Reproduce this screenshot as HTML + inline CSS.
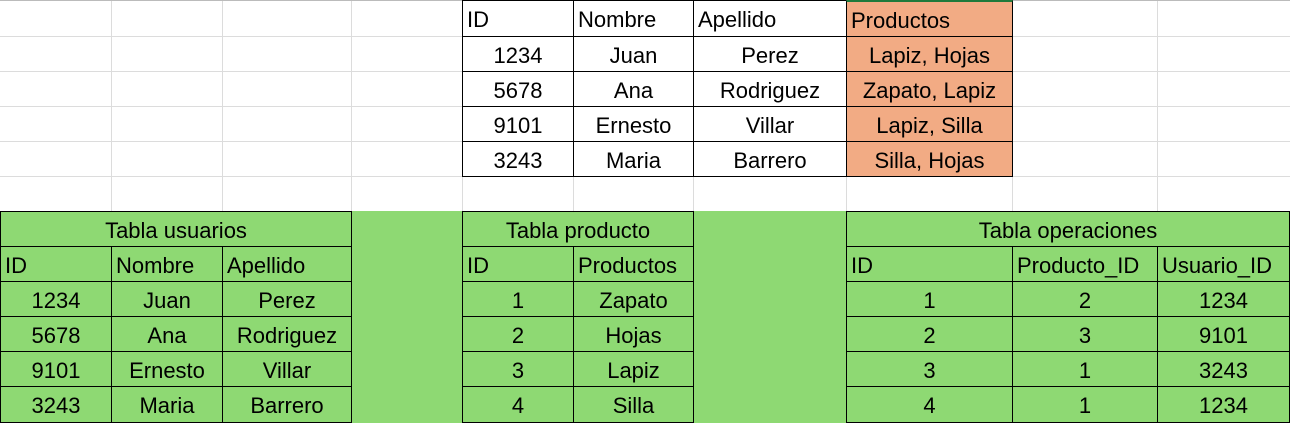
<!DOCTYPE html>
<html><head><meta charset="utf-8"><style>
body{margin:0;width:1290px;height:423px;overflow:hidden;background:#fff;position:relative;font-family:"Liberation Sans",Arial,sans-serif;font-size:22px;color:#000}
.g{position:absolute;background:#dcdcdc}
.c{position:absolute;box-sizing:border-box;border:1px solid #000;line-height:36px;padding-top:1px;text-align:center;white-space:nowrap;overflow:hidden}
.l{text-align:left;padding-left:4px}
.o{background:#F2AB84}
</style></head><body>
<div class="g" style="left:111px;top:0;width:1px;height:211px"></div>
<div class="g" style="left:222px;top:0;width:1px;height:211px"></div>
<div class="g" style="left:351px;top:0;width:1px;height:211px"></div>
<div class="g" style="left:462px;top:0;width:1px;height:211px"></div>
<div class="g" style="left:573px;top:0;width:1px;height:211px"></div>
<div class="g" style="left:693px;top:0;width:1px;height:211px"></div>
<div class="g" style="left:846px;top:0;width:1px;height:211px"></div>
<div class="g" style="left:1012px;top:0;width:1px;height:211px"></div>
<div class="g" style="left:1157px;top:0;width:1px;height:211px"></div>
<div class="g" style="left:0;top:36px;width:1290px;height:1px"></div>
<div class="g" style="left:0;top:71px;width:1290px;height:1px"></div>
<div class="g" style="left:0;top:106px;width:1290px;height:1px"></div>
<div class="g" style="left:0;top:141px;width:1290px;height:1px"></div>
<div class="g" style="left:0;top:176px;width:1290px;height:1px"></div>
<div class="g" style="left:0;top:0;width:1290px;height:1px;background:#bbb"></div>
<div style="position:absolute;left:0;top:211px;width:1290px;height:212px;background:#8ED973"></div>

<div class="c l" style="left:462px;top:0;width:112px;height:37px">ID</div>
<div class="c l" style="left:573px;top:0;width:121px;height:37px">Nombre</div>
<div class="c l" style="left:693px;top:0;width:154px;height:37px">Apellido</div>
<div class="c l o" style="left:846px;top:0;width:167px;height:37px;border-top:2px solid #1e7a3c">Productos</div>

<div class="c" style="left:462px;top:36px;width:112px;height:36px">1234</div>
<div class="c" style="left:573px;top:36px;width:121px;height:36px">Juan</div>
<div class="c" style="left:693px;top:36px;width:154px;height:36px">Perez</div>
<div class="c o" style="left:846px;top:36px;width:167px;height:36px">Lapiz, Hojas</div>

<div class="c" style="left:462px;top:71px;width:112px;height:36px">5678</div>
<div class="c" style="left:573px;top:71px;width:121px;height:36px">Ana</div>
<div class="c" style="left:693px;top:71px;width:154px;height:36px">Rodriguez</div>
<div class="c o" style="left:846px;top:71px;width:167px;height:36px">Zapato, Lapiz</div>

<div class="c" style="left:462px;top:106px;width:112px;height:36px">9101</div>
<div class="c" style="left:573px;top:106px;width:121px;height:36px">Ernesto</div>
<div class="c" style="left:693px;top:106px;width:154px;height:36px">Villar</div>
<div class="c o" style="left:846px;top:106px;width:167px;height:36px">Lapiz, Silla</div>

<div class="c" style="left:462px;top:141px;width:112px;height:36px">3243</div>
<div class="c" style="left:573px;top:141px;width:121px;height:36px">Maria</div>
<div class="c" style="left:693px;top:141px;width:154px;height:36px">Barrero</div>
<div class="c o" style="left:846px;top:141px;width:167px;height:36px">Silla, Hojas</div>

<div class="c" style="left:0;top:211px;width:352px;height:36px">Tabla usuarios</div>
<div class="c l" style="left:0;top:246px;width:112px;height:36px">ID</div>
<div class="c l" style="left:111px;top:246px;width:112px;height:36px">Nombre</div>
<div class="c l" style="left:222px;top:246px;width:130px;height:36px">Apellido</div>
<div class="c" style="left:0;top:281px;width:112px;height:36px">1234</div>
<div class="c" style="left:111px;top:281px;width:112px;height:36px">Juan</div>
<div class="c" style="left:222px;top:281px;width:130px;height:36px">Perez</div>
<div class="c" style="left:0;top:316px;width:112px;height:36px">5678</div>
<div class="c" style="left:111px;top:316px;width:112px;height:36px">Ana</div>
<div class="c" style="left:222px;top:316px;width:130px;height:36px">Rodriguez</div>
<div class="c" style="left:0;top:351px;width:112px;height:36px">9101</div>
<div class="c" style="left:111px;top:351px;width:112px;height:36px">Ernesto</div>
<div class="c" style="left:222px;top:351px;width:130px;height:36px">Villar</div>
<div class="c" style="left:0;top:386px;width:112px;height:37px">3243</div>
<div class="c" style="left:111px;top:386px;width:112px;height:37px">Maria</div>
<div class="c" style="left:222px;top:386px;width:130px;height:37px">Barrero</div>

<div class="c" style="left:462px;top:211px;width:232px;height:36px">Tabla producto</div>
<div class="c l" style="left:462px;top:246px;width:112px;height:36px">ID</div>
<div class="c l" style="left:573px;top:246px;width:121px;height:36px">Productos</div>
<div class="c" style="left:462px;top:281px;width:112px;height:36px">1</div>
<div class="c" style="left:573px;top:281px;width:121px;height:36px">Zapato</div>
<div class="c" style="left:462px;top:316px;width:112px;height:36px">2</div>
<div class="c" style="left:573px;top:316px;width:121px;height:36px">Hojas</div>
<div class="c" style="left:462px;top:351px;width:112px;height:36px">3</div>
<div class="c" style="left:573px;top:351px;width:121px;height:36px">Lapiz</div>
<div class="c" style="left:462px;top:386px;width:112px;height:37px">4</div>
<div class="c" style="left:573px;top:386px;width:121px;height:37px">Silla</div>

<div class="c" style="left:846px;top:211px;width:444px;height:36px">Tabla operaciones</div>
<div class="c l" style="left:846px;top:246px;width:167px;height:36px">ID</div>
<div class="c l" style="left:1012px;top:246px;width:146px;height:36px">Producto_ID</div>
<div class="c l" style="left:1157px;top:246px;width:133px;height:36px">Usuario_ID</div>
<div class="c" style="left:846px;top:281px;width:167px;height:36px">1</div>
<div class="c" style="left:1012px;top:281px;width:146px;height:36px">2</div>
<div class="c" style="left:1157px;top:281px;width:133px;height:36px">1234</div>
<div class="c" style="left:846px;top:316px;width:167px;height:36px">2</div>
<div class="c" style="left:1012px;top:316px;width:146px;height:36px">3</div>
<div class="c" style="left:1157px;top:316px;width:133px;height:36px">9101</div>
<div class="c" style="left:846px;top:351px;width:167px;height:36px">3</div>
<div class="c" style="left:1012px;top:351px;width:146px;height:36px">1</div>
<div class="c" style="left:1157px;top:351px;width:133px;height:36px">3243</div>
<div class="c" style="left:846px;top:386px;width:167px;height:37px">4</div>
<div class="c" style="left:1012px;top:386px;width:146px;height:37px">1</div>
<div class="c" style="left:1157px;top:386px;width:133px;height:37px">1234</div>
</body></html>
